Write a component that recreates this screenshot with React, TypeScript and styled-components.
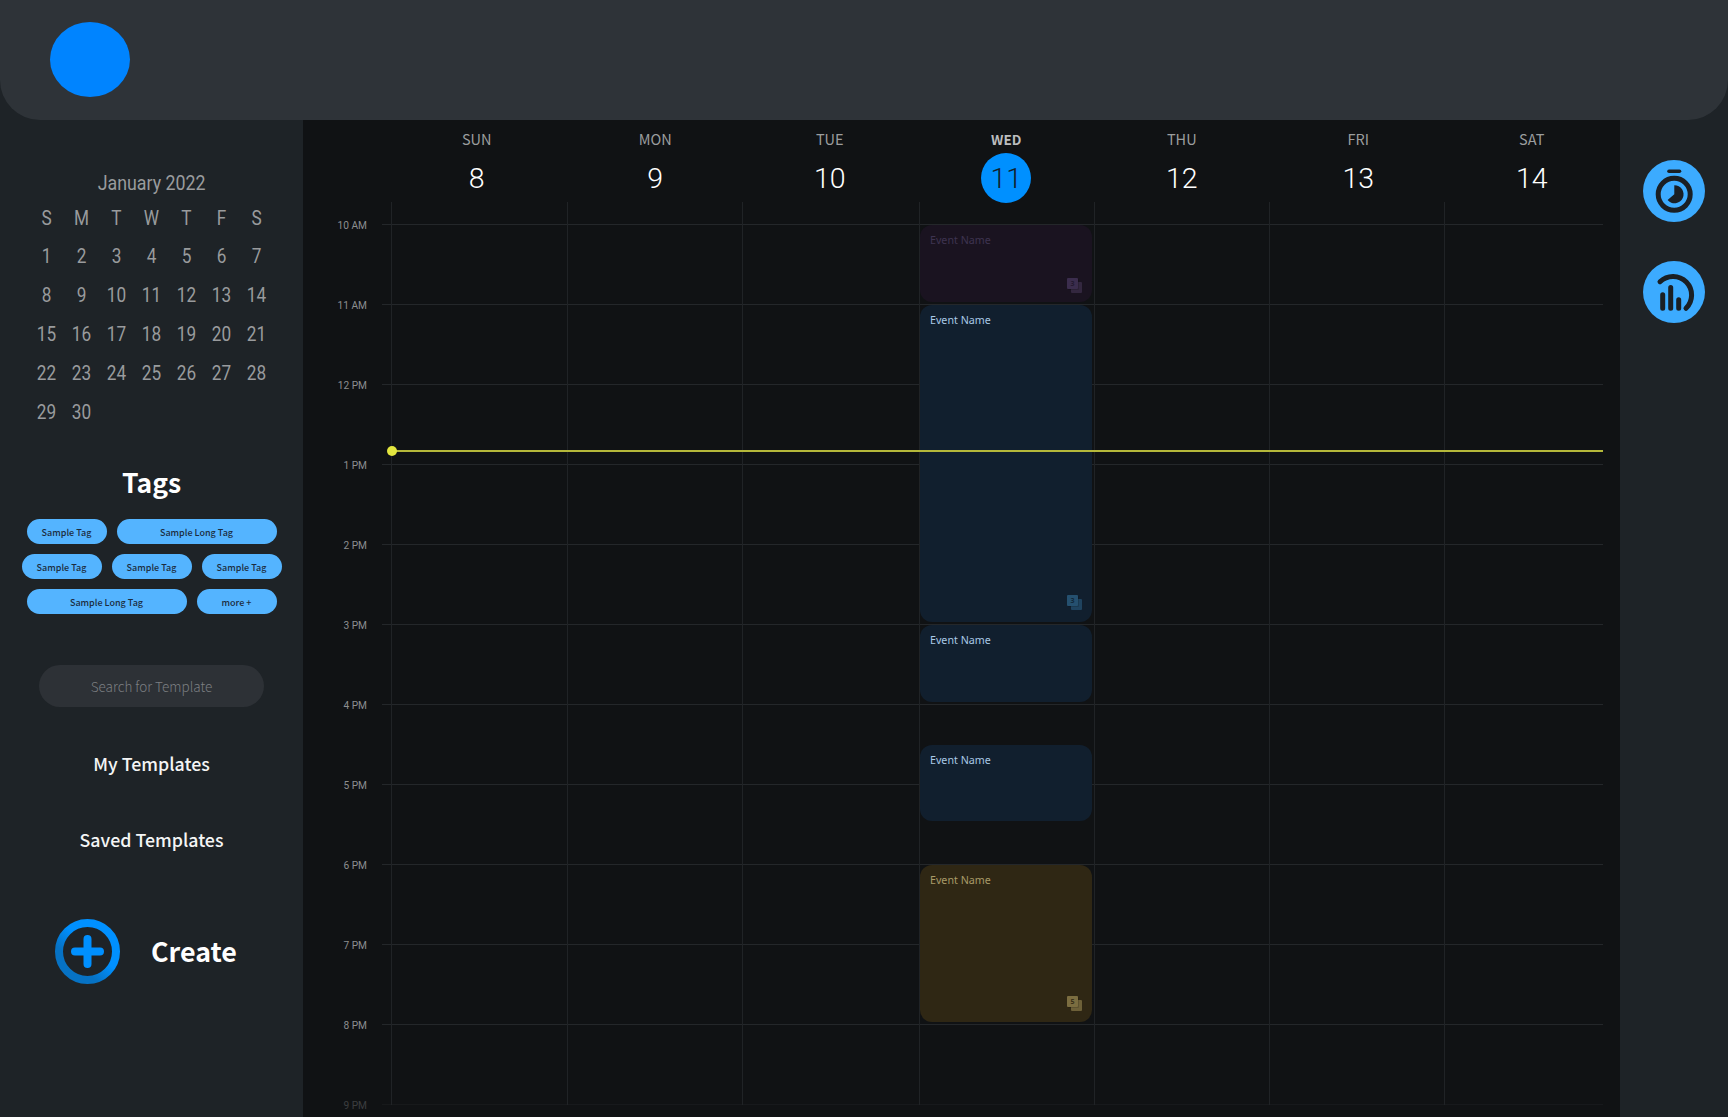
import React from "react";
import styled, { createGlobalStyle } from "styled-components";

const SOURCE = `"Noto Sans CJK SC", "Noto Sans", sans-serif`;

const GlobalStyle = createGlobalStyle`
  html, body {
    margin: 0;
    padding: 0;
    background: #1e2327;
  }
  * {
    box-sizing: border-box;
  }
`;

const Page = styled.div`
  width: 1728px;
  height: 1117px;
  overflow: hidden;
  display: grid;
  grid-template-columns: 303px 1fr 108px;
  grid-template-rows: 120px 1fr;
  background: #1e2327;
`;

const Header = styled.header`
  grid-column: 1 / 4;
  background: #2e3338;
  border-radius: 0 0 40px 40px;
  padding: 22px 50px 0;
`;

const Logo = styled.div`
  width: 80px;
  height: 75px;
  border-radius: 50%;
  background: #0084ff;
`;

const Sidebar = styled.aside`
  display: flex;
  flex-direction: column;
  align-items: center;
  padding-top: 49px;
`;

const MonthTitle = styled.div`
  font-family: Roboto, sans-serif;
  font-size: 20px;
  line-height: 28px;
  color: #999b9d;
  transform: scaleX(0.89);
`;

const MonthGrid = styled.div`
  display: grid;
  grid-template-columns: repeat(7, 35px);
  grid-template-rows: 36px repeat(5, 39px);
  margin-top: 3px;
  margin-left: -1px;
`;

const MonthCell = styled.div`
  display: flex;
  align-items: center;
  justify-content: center;
  font-family: Roboto, sans-serif;
  font-size: 20px;
  color: #999b9d;
  transform: scaleX(0.86);
`;

const TagsTitle = styled.h2`
  margin: 31px 0 0;
  font-family: ${SOURCE};
  font-size: 26.5px;
  line-height: 40px;
  font-weight: 700;
  color: #ffffff;
`;

const TagList = styled.div`
  width: 270px;
  margin-top: 17px;
  display: flex;
  flex-wrap: wrap;
  justify-content: center;
  gap: 10px;
`;

const Tag = styled.div<{ $long?: boolean }>`
  width: ${(p) => (p.$long ? 160 : 80)}px;
  height: 25px;
  padding-top: 1px;
  border-radius: 13px;
  background: #54b4ff;
  color: #1c2d3e;
  font-family: ${SOURCE};
  font-size: 9px;
  font-weight: 500;
  display: flex;
  align-items: center;
  justify-content: center;
`;

const SearchBox = styled.div`
  width: 225px;
  height: 42px;
  margin-top: 51px;
  border-radius: 21px;
  background: #2d3136;
  color: #7c7f82;
  font-family: ${SOURCE};
  font-size: 13.5px;
  font-weight: 300;
  display: flex;
  align-items: center;
  justify-content: center;
`;

const TemplateLink = styled.div`
  font-family: ${SOURCE};
  font-size: 17.8px;
  line-height: 30px;
  font-weight: 500;
  color: #f4f5f5;
  margin-top: 41px;
  & + & {
    margin-top: 46px;
  }
`;

const CreateRow = styled.div`
  align-self: flex-start;
  margin: 65px 0 0 55px;
  display: flex;
  align-items: center;
  gap: 31px;
`;

const CreateLabel = styled.div`
  font-family: ${SOURCE};
  font-size: 26.8px;
  font-weight: 700;
  line-height: 38px;
  margin-bottom: 1px;
  color: #ffffff;
`;

const Main = styled.main`
  background: #101214;
  display: flex;
  flex-direction: column;
  min-height: 0;
`;

const DayHeader = styled.div`
  height: 82px;
  padding-left: 88px;
  display: grid;
  grid-template-columns: repeat(7, 175.5px);
`;

const DayCell = styled.div<{ $nudge: number }>`
  display: flex;
  flex-direction: column;
  align-items: center;
  padding-top: 8px;
  transform: translateX(${(p) => p.$nudge}px);
`;

const DayName = styled.div<{ $today?: boolean }>`
  font-family: ${SOURCE};
  font-size: ${(p) => (p.$today ? 13.5 : 14.5)}px;
  line-height: 22px;
  font-weight: ${(p) => (p.$today ? 700 : 400)};
  color: ${(p) => (p.$today ? "#bcbdbe" : "#9b9d9e")};
`;

const DayNumber = styled.div<{ $today?: boolean }>`
  width: 50px;
  height: 50px;
  margin-top: 3px;
  border-radius: 50%;
  background: ${(p) => (p.$today ? "#0090ff" : "transparent")};
  color: ${(p) => (p.$today ? "#11202c" : "#ffffff")};
  font-family: Roboto, sans-serif;
  font-size: 28.5px;
  font-weight: 350;
  display: flex;
  align-items: center;
  justify-content: center;
`;

const Schedule = styled.div`
  position: relative;
  flex: 1;
  min-height: 0;
  overflow: hidden;
  padding-top: 22px;
`;

const HourRow = styled.div<{ $faded?: boolean }>`
  height: 80px;
  display: flex;
  align-items: flex-start;
  padding-right: 17px;
  opacity: ${(p) => (p.$faded ? 0.35 : 1)};
`;

const HourLabel = styled.div`
  width: 64px;
  margin-top: -6.5px;
  text-align: right;
  font-family: Roboto, sans-serif;
  font-size: 10.2px;
  line-height: 16px;
  color: #8c8e90;
`;

const HourLine = styled.div`
  flex: 1;
  margin-left: 15px;
  height: 1px;
  background: #24272a;
`;

const Columns = styled.div`
  position: absolute;
  top: 0;
  left: 88px;
  right: 17px;
  height: 903px;
  display: grid;
  grid-template-columns: 176px 175px 177px 175px 175px 175px 1fr;
`;

const Column = styled.div`
  position: relative;
  border-left: 1px solid #202326;
`;

const EventCard = styled.div<{ $top: number; $height: number; $tone: string; $ink: string }>`
  position: absolute;
  left: 0;
  width: 172px;
  top: ${(p) => p.$top}px;
  height: ${(p) => p.$height}px;
  background: ${(p) => p.$tone};
  color: ${(p) => p.$ink};
  border-radius: 12px;
  padding: 6.5px 10px;
  font-family: "Noto Sans", sans-serif;
  font-size: 10.7px;
  line-height: 16px;
`;

const StackIcon = styled.div<{ $back: string; $bottom: number }>`
  position: absolute;
  right: 10px;
  bottom: ${(p) => p.$bottom}px;
  width: 15px;
  height: 15px;
  &::before {
    content: "";
    position: absolute;
    right: 0;
    bottom: 0;
    width: 11px;
    height: 11px;
    border-radius: 1px;
    background: ${(p) => p.$back};
  }
`;

const StackFront = styled.div<{ $front: string; $digit: string }>`
  position: absolute;
  left: 0;
  top: 0;
  width: 11px;
  height: 11px;
  border-radius: 1px;
  background: ${(p) => p.$front};
  color: ${(p) => p.$digit};
  box-shadow: 1px 1px 0 rgba(0, 0, 0, 0.15);
  font-family: "Noto Sans", sans-serif;
  font-size: 7px;
  font-weight: 700;
  line-height: 11px;
  text-align: center;
`;

const TimeLine = styled.div`
  position: absolute;
  top: 248px;
  left: 88px;
  right: 17px;
  height: 2px;
  background: #b5b83a;
  &::before {
    content: "";
    position: absolute;
    left: -4px;
    top: -4px;
    width: 10px;
    height: 10px;
    border-radius: 50%;
    background: #e3e63f;
  }
`;

const Rail = styled.aside`
  display: flex;
  flex-direction: column;
  align-items: center;
  padding-top: 40px;
  gap: 39px;
`;

const RailButton = styled.div`
  width: 62px;
  height: 62px;
  border-radius: 50%;
  background: #3cabff;
`;

const days = [
  { name: "SUN", num: 8, nudge: -2 },
  { name: "MON", num: 9, nudge: 1 },
  { name: "TUE", num: 10, nudge: 0 },
  { name: "WED", num: 11, nudge: 1 },
  { name: "THU", num: 12, nudge: 1 },
  { name: "FRI", num: 13, nudge: 2 },
  { name: "SAT", num: 14, nudge: 0 },
];

const hours = ["10 AM", "11 AM", "12 PM", "1 PM", "2 PM", "3 PM", "4 PM", "5 PM", "6 PM", "7 PM", "8 PM", "9 PM"];

const purple = { tone: "#1a1320", ink: "#3e3350", front: "#3b2d4d", back: "#33273f", digit: "#241a30" };
const blue = { tone: "#111f2e", ink: "#a9c9e6", front: "#25506f", back: "#1f435f", digit: "#12283a" };
const yellow = { tone: "#2f2714", ink: "#a89a68", front: "#7b6d40", back: "#6d6038", digit: "#3a3118" };

const events = [
  { top: 23, height: 77, count: 3, iconBottom: 9, hue: purple },
  { top: 103, height: 317, count: 3, iconBottom: 12, hue: blue },
  { top: 423, height: 77, hue: blue },
  { top: 543, height: 76, hue: blue },
  { top: 663, height: 157, count: 5, iconBottom: 11, hue: yellow },
];

const CreateIcon = () => (
  <svg width="65" height="65" viewBox="0 0 65 65">
    <defs>
      <linearGradient id="ring" x1="0.9" y1="0.1" x2="0.2" y2="0.9">
        <stop offset="0.45" stopColor="#0090ff" />
        <stop offset="0.8" stopColor="#0672c4" />
      </linearGradient>
    </defs>
    <circle cx="32.5" cy="32.5" r="28.5" fill="none" stroke="url(#ring)" strokeWidth="8" />
    <path d="M32.5 20v25M20 32.5h25" stroke="#0090ff" strokeWidth="8" strokeLinecap="round" />
  </svg>
);

const TimerIcon = () => (
  <svg width="62" height="62" viewBox="0 0 62 62">
    <path d="M26 11.2h10.5" stroke="#1a1f24" strokeWidth="3.6" strokeLinecap="round" />
    <circle cx="31.2" cy="34.3" r="16" fill="none" stroke="#1a1f24" strokeWidth="5" />
    <path d="M31.3 34.3V25.3A9 9 0 1 1 24.6 40Z" fill="#1a1f24" />
  </svg>
);

const StatsIcon = () => (
  <svg width="62" height="62" viewBox="0 0 62 62" fill="none" stroke="#1a1f24" strokeWidth="5" strokeLinecap="round">
    <path d="M17 20.7A17.5 17.5 0 0 1 43 47.3" />
    <path d="M19.7 33.8V47.2M27.7 26.5V47.2M35.7 38.8V47.2" />
  </svg>
);

const monthDays = Array.from({ length: 30 }, (_, i) => i + 1);

export default function App() {
  return (
    <Page>
      <GlobalStyle />
      <Header>
        <Logo />
      </Header>
      <Sidebar>
        <MonthTitle>January 2022</MonthTitle>
        <MonthGrid>
          {["S", "M", "T", "W", "T", "F", "S"].map((d, i) => (
            <MonthCell key={i}>{d}</MonthCell>
          ))}
          {monthDays.map((d) => (
            <MonthCell key={d}>{d}</MonthCell>
          ))}
        </MonthGrid>
        <TagsTitle>Tags</TagsTitle>
        <TagList>
          <Tag>Sample Tag</Tag>
          <Tag $long>Sample Long Tag</Tag>
          <Tag>Sample Tag</Tag>
          <Tag>Sample Tag</Tag>
          <Tag>Sample Tag</Tag>
          <Tag $long>Sample Long Tag</Tag>
          <Tag>more +</Tag>
        </TagList>
        <SearchBox>Search for Template</SearchBox>
        <TemplateLink>My Templates</TemplateLink>
        <TemplateLink>Saved Templates</TemplateLink>
        <CreateRow>
          <CreateIcon />
          <CreateLabel>Create</CreateLabel>
        </CreateRow>
      </Sidebar>
      <Main>
        <DayHeader>
          {days.map((d) => (
            <DayCell key={d.name} $nudge={d.nudge}>
              <DayName $today={d.num === 11}>{d.name}</DayName>
              <DayNumber $today={d.num === 11}>{d.num}</DayNumber>
            </DayCell>
          ))}
        </DayHeader>
        <Schedule>
          {hours.map((h) => (
            <HourRow key={h} $faded={h === "9 PM"}>
              <HourLabel>{h}</HourLabel>
              <HourLine />
            </HourRow>
          ))}
          <Columns>
            {days.map((d) => (
              <Column key={d.name}>
                {d.num === 11 &&
                  events.map((ev) => (
                    <EventCard key={ev.top} $top={ev.top} $height={ev.height} $tone={ev.hue.tone} $ink={ev.hue.ink}>
                      Event Name
                      {ev.count && (
                        <StackIcon $back={ev.hue.back} $bottom={ev.iconBottom}>
                          <StackFront $front={ev.hue.front} $digit={ev.hue.digit}>
                            {ev.count}
                          </StackFront>
                        </StackIcon>
                      )}
                    </EventCard>
                  ))}
              </Column>
            ))}
          </Columns>
          <TimeLine />
        </Schedule>
      </Main>
      <Rail>
        <RailButton>
          <TimerIcon />
        </RailButton>
        <RailButton>
          <StatsIcon />
        </RailButton>
      </Rail>
    </Page>
  );
}
